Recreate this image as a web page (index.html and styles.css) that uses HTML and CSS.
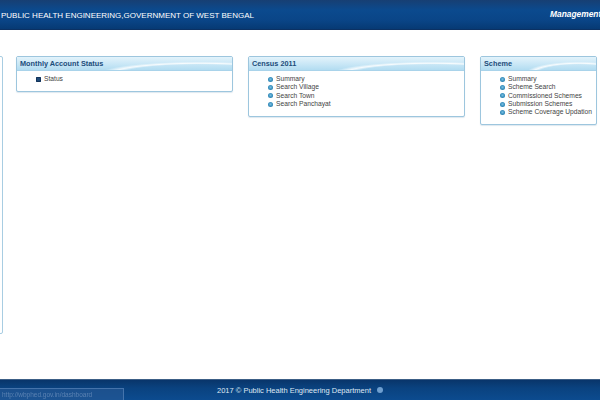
FILE: index.html
```html
<!DOCTYPE html>
<html lang="en">
<head>
<meta charset="UTF-8">
<meta name="viewport" content="width=device-width, initial-scale=1.0">
<title>PHED - Management Dashboard</title>
<link rel="stylesheet" href="styles.css">
</head>
<body>
<div class="topbar">
    <div class="site-title">PUBLIC HEALTH ENGINEERING,GOVERNMENT OF WEST BENGAL</div>
    <div class="module-title">Management</div>
</div>

<div class="main">
    <div class="side-panel"></div>

    <div class="boxes">
        <div class="box box-wide">
            <div class="box-head">Monthly Account Status</div>
            <ul class="links square">
                <li><a href="#">Status</a></li>
            </ul>
        </div>

        <div class="box box-wide">
            <div class="box-head">Census 2011</div>
            <ul class="links">
                <li><a href="#">Summary</a></li>
                <li><a href="#">Search Village</a></li>
                <li><a href="#">Search Town</a></li>
                <li><a href="#">Search Panchayat</a></li>
            </ul>
        </div>

        <div class="box box-narrow">
            <div class="box-head">Scheme</div>
            <ul class="links">
                <li><a href="#">Summary</a></li>
                <li><a href="#">Scheme Search</a></li>
                <li><a href="#">Commissioned Schemes</a></li>
                <li><a href="#">Submission Schemes</a></li>
                <li><a href="#">Scheme Coverage Updation</a></li>
            </ul>
        </div>
    </div>
</div>

<div class="footer">
    <span>2017 &copy; Public Health Engineering Department</span>
    <span class="go-top"></span>
</div>

<!-- browser link preview -->
<div class="status-url">http://wbphed.gov.in/dashboard</div>
</body>
</html>
```

FILE: styles.css
```css
html, body {
    margin: 0;
    padding: 0;
    height: 100%;
    overflow: hidden;
}
body {
    font-family: "Liberation Sans", Arial, sans-serif;
    background: #fff;
    color: #333;
    display: flex;
    flex-direction: column;
}
.topbar {
    height: 29px;
    display: flex;
    align-items: center;
    justify-content: space-between;
    background: linear-gradient(to bottom, #173f73 0%, #0b4a8e 35%, #0a4587 70%, #063a74 100%);
    border-bottom: 1px solid #0b3163;
    color: #fff;
}
.site-title {
    font-size: 8px;
    padding-left: 1px;
    margin-top: 1px;
}
.module-title {
    font-size: 8.4px;
    font-weight: bold;
    font-style: italic;
    margin-top: -2px;
    white-space: nowrap;
    width: 50px;
}
.main {
    flex: 1;
    display: flex;
    align-items: flex-start;
    padding-top: 26px;
}
.side-panel {
    width: 200px;
    height: 276px;
    margin-left: -199px;
    border: 1px solid #a8cde2;
    border-radius: 2px;
    flex-shrink: 0;
}
.boxes {
    display: flex;
    align-items: flex-start;
    gap: 15px;
    margin-left: 13px;
}
.box {
    border: 1px solid #9dc6de;
    border-radius: 2px;
    box-shadow: 0 1px 1px rgba(120, 160, 190, 0.25);
    background: #fff;
    padding-bottom: 8px;
}
.box-wide {
    width: 215px;
}
.box-narrow {
    width: 115px;
}
.box-head {
    height: 13px;
    line-height: 13px;
    padding-left: 3px;
    font-size: 7.3px;
    font-weight: bold;
    color: #1c4d7b;
    background:
        radial-gradient(ellipse 60% 120% at 85% 130%, rgba(255, 255, 255, 0) 60%, rgba(255, 255, 255, 0.85) 68%, rgba(255, 255, 255, 0) 78%),
        linear-gradient(to bottom, #e3f3fb 0%, #c9e7f6 55%, #b2dcf1 100%);
    border-bottom: 1px solid #a9d3ea;
}
.links {
    list-style: none;
    margin: 4px 0 0 0;
    padding: 0 0 0 19px;
}
.links li {
    font-size: 6.7px;
    line-height: 8.3px;
    display: flex;
    align-items: center;
}
.links li::before {
    content: "";
    width: 5px;
    height: 5px;
    margin-right: 3px;
    border-radius: 50%;
    background: radial-gradient(circle at 50% 45%, #7cc0e2 0%, #2f88b8 60%, #1f6d99 100%);
    flex-shrink: 0;
}
.links.square li::before {
    border-radius: 1px;
    background: #1f4a78;
    box-shadow: inset 0 0 0 1px #13335a;
}
.links a {
    color: #444;
    text-decoration: none;
}
.footer {
    height: 20px;
    display: flex;
    align-items: center;
    justify-content: center;
    gap: 6px;
    font-size: 7.5px;
    color: #dfe8f3;
    background: linear-gradient(to bottom, #09356a 0%, #0a427f 40%, #0c4b8f 100%);
    border-top: 1px solid #3c5f86;
}
.go-top {
    width: 6px;
    height: 6px;
    border-radius: 50%;
    background: #6f9fd0;
}
.status-url {
    position: fixed;
    left: 0;
    bottom: 0;
    width: 121px;
    height: 11px;
    line-height: 11px;
    padding-left: 2px;
    font-size: 6.5px;
    color: rgba(130, 160, 200, 0.6);
    background: rgba(40, 90, 150, 0.6);
    border: 1px solid rgba(110, 150, 200, 0.5);
    border-left: none;
    border-bottom: none;
    white-space: nowrap;
}
```
